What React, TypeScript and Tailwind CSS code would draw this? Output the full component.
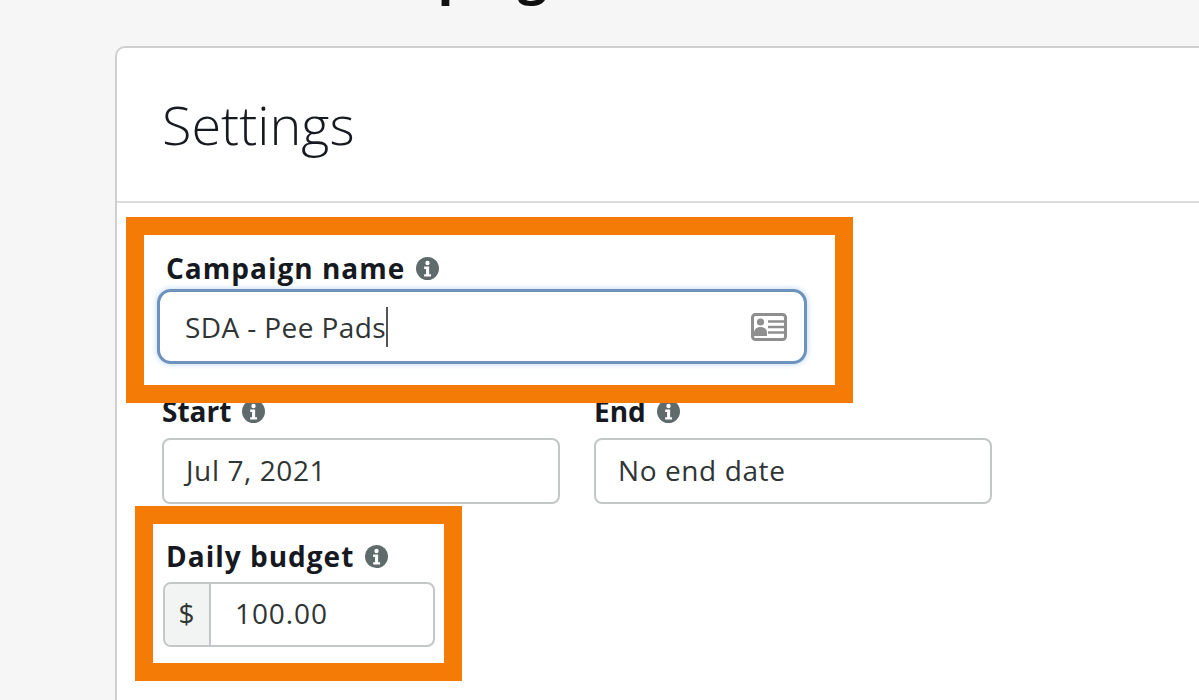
import React from 'react'
import clsx from 'clsx'

function InfoIcon({ className }: { className?: string }) {
  return (
    <svg viewBox="0 0 24 24" className={className} aria-hidden="true">
      <circle cx="12" cy="12" r="12" fill="#5f6b6b" />
      <circle cx="12" cy="6.2" r="2.3" fill="#fff" />
      <path d="M8.5 10h5.2v8h2v2.4H8.5V18h2v-5.6h-2z" fill="#fff" />
    </svg>
  )
}

function ContactCardIcon() {
  return (
    <svg viewBox="0 0 36 28" className="h-[28px] w-[36px]" aria-hidden="true">
      <rect x="1.5" y="1.5" width="33" height="25" rx="3" fill="#fff" stroke="#8f8f8f" strokeWidth="3" />
      <circle cx="9.5" cy="9" r="3.6" fill="#8f8f8f" />
      <path d="M3 23v-3c0-4 3-6 6.500-6s6.500 2 6.500 6v3z" fill="#8f8f8f" />
      <path d="M17 8.500h17M17 14h17M17 19.500h17" stroke="#8f8f8f" strokeWidth="2.600" />
    </svg>
  )
}

function Label({ tight, children }: { tight?: boolean; children: React.ReactNode }) {
  return (
    <div
      className={clsx(
        'flex items-center gap-[11px] text-[28px] leading-[32px] font-bold text-[#16191f]',
        tight ? 'tracking-normal' : 'tracking-[1px]',
      )}
    >
      {children}
      <InfoIcon className="h-[23px] w-[23px]" />
    </div>
  )
}

function DateInput({ value }: { value: string }) {
  return (
    <div className="flex h-[66px] w-[398px] items-center rounded-[8px] border-2 border-[#c4c7c7] bg-white pb-[3px] pl-[22px] text-[28px] tracking-[0.6px] text-[#2f3535]">
      {value}
    </div>
  )
}

export default function App() {
  return (
    <div className="h-[700px] w-[1199px] overflow-hidden bg-[#f6f6f6]">
      <div
        className="h-[700px] w-[1199px] blur-[0.7px]"
        style={{ fontFamily: '"Open Sans", "Noto Sans", sans-serif' }}
      >
        <div className="-mt-[52px] h-[98px] pl-[322px] text-[52px] leading-[50px] font-bold text-[#111]">
          Campaign
        </div>

        <div className="relative ml-[115px] h-[760px] rounded-tl-[10px] border-t-2 border-l-2 border-[#cfcfcf] bg-white">
          <div className="flex h-[155px] items-center border-b-2 border-[#dcdcdc] pl-[45px] text-[54px] font-light text-[#16191f]">
            Settings
          </div>

          <div className="pl-[45px]">
            <div className="pl-[4px] pt-[49px]">
              <Label>Campaign name</Label>
            </div>
            <div className="mt-[5px] -ml-[5px] flex h-[75px] w-[650px] items-center justify-between rounded-[14px] border-[3px] border-[#6d93bd] bg-white pl-[25px] pr-[17px] text-[28px] tracking-[0.4px] text-[#2f3535] shadow-[0_0_6px_#b9d4ee]">
              <span className="-mr-[2px] border-r-2 border-[#555] leading-[40px]">SDA - Pee Pads</span>
              <ContactCardIcon />
            </div>

            <div className="mt-[31px] flex gap-[34px]">
              <div className="w-[398px]">
                <Label tight>Start</Label>
                <div className="mt-[11px]">
                  <DateInput value="Jul 7, 2021" />
                </div>
              </div>
              <div className="w-[398px]">
                <Label tight>End</Label>
                <div className="mt-[11px]">
                  <DateInput value="No end date" />
                </div>
              </div>
            </div>

            <div className="mt-[36px] pl-[4px]">
              <Label>Daily budget</Label>
            </div>
            <div className="mt-[10px] ml-[1px] flex h-[65px] w-[272px] overflow-hidden rounded-[8px] border-2 border-[#c4c7c7] bg-white text-[28px] tracking-[0.9px] text-[#2f3535]">
              <div className="flex w-[46px] items-center justify-center border-r-2 border-[#c4c7c7] bg-[#f2f3f3] pb-[3px]">$</div>
              <div className="flex flex-1 items-center pb-[3px] pl-[24px]">100.00</div>
            </div>
          </div>

          {/* orange callouts drawn over the form */}
          <div className="absolute top-[169px] left-[9px] h-[186px] w-[727px] border-[18px] border-[#f47b06]" />
          <div className="absolute top-[458px] left-[18px] h-[175px] w-[327px] border-[18px] border-[#f47b06]" />
        </div>
      </div>
    </div>
  )
}
